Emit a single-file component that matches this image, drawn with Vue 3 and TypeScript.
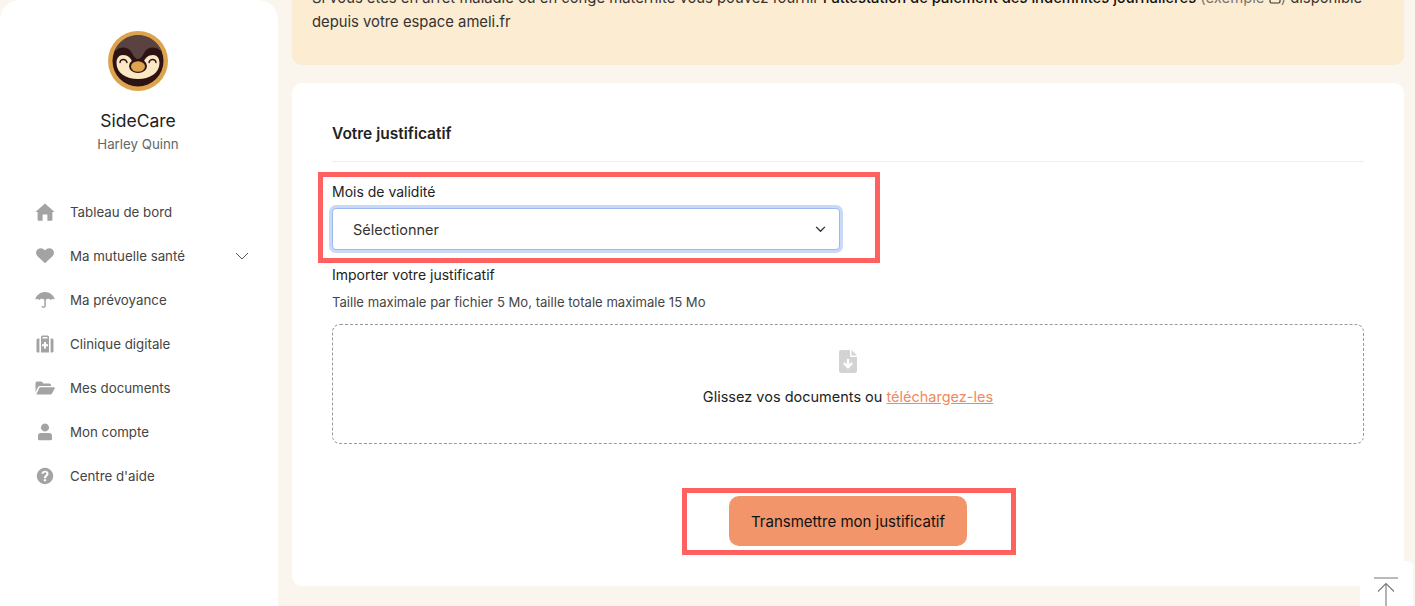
<script setup lang="ts">
interface NavItem { label: string; icon: string; vb: string; chevron?: boolean }
const nav: NavItem[] = [
  { label: 'Tableau de bord', vb: '0 0 20 18', icon: 'M10 0.5 L19.6 9 L17.4 9 L17.4 17 Q17.4 17.7 16.7 17.7 L12.4 17.7 L12.4 11.5 L7.6 11.5 L7.6 17.7 L3.3 17.7 Q2.6 17.7 2.6 17 L2.6 9 L0.4 9 Z' },
  { label: 'Ma mutuelle santé', vb: '0 0 20 18', chevron: true, icon: 'M10 16.3 L2.8 9.6 C0.4 7.2 0.6 3.8 2.8 2.2 C5.1 0.6 8.2 1.2 10 3.6 C11.8 1.2 14.9 0.6 17.2 2.2 C19.4 3.8 19.6 7.2 17.2 9.6 Z' },
  { label: 'Ma prévoyance', vb: '0 0 20 18', icon: 'M10 1 C14.8 1.2 18.8 4 19.8 8.6 C18.6 7.6 16.8 7.6 15.6 8.9 C14.4 7.6 12.2 7.5 10.8 8.8 L10.8 14.8 C10.8 17.4 6.9 17.8 6.4 15 L7.9 15 C8.1 16.1 9.3 16 9.3 14.8 L9.3 8.8 C7.9 7.5 5.6 7.6 4.4 8.9 C3.2 7.6 1.4 7.6 0.2 8.6 C1.2 4 5.2 1.2 10 1 Z' },
  { label: 'Clinique digitale', vb: '0 0 20 18', icon: 'M7.4 0.5 L12.6 0.5 Q14 0.5 14 2 L14 17.5 L6 17.5 L6 2 Q6 0.5 7.4 0.5 Z M7.6 2 L7.6 3.5 L12.4 3.5 L12.4 2 Z M9 7 L9 9.2 L7 9.2 L7 11.2 L9 11.2 L9 13.4 L11 13.4 L11 11.2 L13 11.2 L13 9.2 L11 9.2 L11 7 Z M3 3.5 L4.4 3.5 L4.4 17.5 L3 17.5 Q1.5 17.5 1.5 16 L1.5 5 Q1.5 3.5 3 3.5 Z M15.6 3.5 L17 3.5 Q18.5 3.5 18.5 5 L18.5 16 Q18.5 17.5 17 17.5 L15.6 17.5 Z' },
  { label: 'Mes documents', vb: '0 0 20 18', icon: 'M0.5 4 Q0.5 2.5 2 2.5 L6.5 2.5 L8.5 4.5 L14.5 4.5 Q16 4.5 16 6 L16 7 L5 7 Q3.6 7 3 8.2 L0.5 13 Z M4.6 8.2 L19 8.2 Q20.2 8.2 19.7 9.4 L17 14.6 Q16.5 15.5 15.5 15.5 L1.3 15.5 Z' },
  { label: 'Mon compte', vb: '0 0 20 18', icon: 'M10 0.5 A4 4 0 1 1 9.99 0.5 Z M6 10 L14 10 Q17 10 17 13 L17 16 Q17 17.2 15.8 17.2 L4.2 17.2 Q3 17.2 3 16 L3 13 Q3 10 6 10 Z' },
  { label: "Centre d'aide", vb: '0 0 20 18', icon: 'M10 0.8 A8.2 8.2 0 1 1 9.99 0.8 Z M10 3.8 C8 3.8 6.7 4.9 6.4 6.6 L8.4 6.9 C8.6 6 9.1 5.6 9.9 5.6 C10.8 5.6 11.4 6.1 11.4 6.8 C11.4 8 9 8.3 9 10.6 L9 11.2 L11 11.2 C11 9.4 13.5 9.2 13.5 6.7 C13.5 5 12 3.8 10 3.8 Z M10 12 A1.2 1.2 0 1 0 10.01 12 Z' },
]
</script>

<template>
  <div class="page">
    <aside class="sidebar">
      <svg class="logo" viewBox="0 0 60 60" width="60" height="60" aria-label="SideCare">
        <circle cx="30" cy="30" r="30" fill="#dea34d" />
        <circle cx="30" cy="30" r="25.5" fill="#2e1315" />
        <path d="M6 21 C12 15 20 15 24 22 C26 26 28 28 30 28 C32 28 34 26 36 22 C40 15 48 15 54 21 A25.5 25.5 0 0 0 6 21 Z" fill="#5a4240" />
        <path d="M8.5 32 C8.5 27 11 24 15 24 C20 24 23.5 27.5 24.5 32 L35.5 32 C36.5 27.5 40 24 45 24 C49 24 51.5 27 51.5 32 C51.5 42 42 48 30 48 C18 48 8.5 42 8.5 32 Z" fill="#fbe8c4" />
        <ellipse cx="30" cy="35" rx="9" ry="7" fill="#2e1315" />
        <ellipse cx="30" cy="35.5" rx="7" ry="5.2" fill="#dea34d" />
        <path d="M12 31.5 C12.5 27.5 18 27.5 19 31.5 M41 31.5 C42 27.5 47.5 27.5 48 31.5" fill="none" stroke="#2e1315" stroke-width="1.4" stroke-linecap="round" />
      </svg>
      <div class="brand">SideCare</div>
      <div class="user">Harley Quinn</div>
      <nav class="nav">
        <a v-for="item in nav" :key="item.label" class="nav-item">
          <svg class="nav-icon" :viewBox="item.vb" width="20" height="18"><path :d="item.icon" fill-rule="evenodd" /></svg>
          <span class="nav-label">{{ item.label }}</span>
          <svg v-if="item.chevron" class="nav-chevron" viewBox="0 0 14 8" width="14" height="8"><path d="M1 1 L7 7 L13 1" fill="none" stroke="#555" stroke-width="1" /></svg>
        </a>
      </nav>
    </aside>

    <main class="main">
      <section class="banner">
        Si vous êtes en arrêt maladie ou en congé maternité vous pouvez fournir <strong>l'attestation de paiement des indemnités journalières</strong>
        <span class="muted"> (exemple <svg class="doc" viewBox="0 0 12 12" width="12" height="12"><rect x="1" y="1" width="10" height="10" rx="1.5" fill="none" stroke="#333" stroke-width="1.2" /><path d="M3.5 5 H8.5 M3.5 7.5 H8.5 M4 1 V0 M8 1 V0" stroke="#333" stroke-width="1" /></svg>)</span> disponible<br />depuis votre espace ameli.fr
      </section>

      <section class="card">
        <h2 class="title">Votre justificatif</h2>
        <div class="field">
          <label class="label">Mois de validité</label>
          <div class="select">
            <span>Sélectionner</span>
            <svg viewBox="0 0 12 8" width="11" height="7"><path d="M1 1 L6 6 L11 1" fill="none" stroke="#333" stroke-width="1.6" /></svg>
          </div>
          <div class="mark mark-field"></div>
        </div>
        <div class="label import">Importer votre justificatif</div>
        <div class="hint">Taille maximale par fichier 5 Mo, taille totale maximale 15 Mo</div>
        <div class="drop">
          <svg viewBox="0 0 18 23" width="18" height="23"><path d="M2 0 H11 V6 Q11 7 12 7 H18 V21 Q18 23 16 23 H2 Q0 23 0 21 V2 Q0 0 2 0 Z M12.5 0 L18 5.5 H12.5 Z" fill="#d3d3d3" /><path d="M9 9 V17 M4.8 13 L9 17.2 L13.2 13" fill="none" stroke="#fff" stroke-width="2.4" /></svg>
          <p class="drop-text">Glissez vos documents ou <a class="link">téléchargez-les</a></p>
        </div>
        <div class="actions">
          <div class="action-wrap">
            <button class="submit" type="button">Transmettre mon justificatif</button>
            <div class="mark mark-btn"></div>
          </div>
        </div>
      </section>
    </main>

    <button class="top" type="button" aria-label="Haut de page">
      <svg viewBox="0 0 26 30" width="26" height="30"><path d="M1 1 H25 M13 30 V6.5 M5 14.5 L13 6.5 L21 14.5" fill="none" stroke="#777" stroke-width="1.1" /></svg>
    </button>
  </div>
</template>

<style scoped>
.page {
  position: relative;
  display: flex;
  height: 606px;
  overflow: hidden;
  background: #fbf6ed;
  font-family: "Inter", "Liberation Sans", sans-serif;
  color: #222;
}
.sidebar {
  flex: 0 0 278px;
  display: flex;
  flex-direction: column;
  align-items: center;
  box-sizing: border-box;
  padding: 31px 2px 0 0;
  background: #fff;
  border-radius: 20px 20px 0 0;
}
.logo { display: block; }
.brand { margin-top: 19px; font-size: 17.5px; line-height: 22px; color: #222; }
.user { margin-top: 2px; font-size: 13.3px; line-height: 20px; color: #666; }
.nav { align-self: stretch; margin-top: 36px; padding: 0 27px 0 35px; display: flex; flex-direction: column; }
.nav-item { display: flex; align-items: center; height: 44px; }
.nav-icon { fill: #a3a3a3; flex: none; margin-right: 15px; }
.nav-label { flex: 1; font-size: 13.3px; color: #444; }
.nav-chevron { flex: none; }
.main { flex: 1; min-width: 0; display: flex; flex-direction: column; gap: 18px; padding: 0 11px 0 14px; }
.banner {
  flex: none;
  box-sizing: border-box;
  height: 89px;
  margin-top: -24px;
  padding: 10px 20px 0;
  background: #fcecd1;
  border-radius: 10px;
  font-size: 14.8px;
  line-height: 24px;
  color: #333;
  white-space: nowrap;
}
.banner strong { font-weight: 500; color: #111; }
.muted { color: #777; }
.doc { vertical-align: -1px; }
.card {
  flex: none;
  box-sizing: border-box;
  height: 503px;
  padding: 40px 40px 0;
  background: #fff;
  border-radius: 10px;
}
.title {
  margin: 0;
  height: 38px;
  line-height: 22px;
  font-size: 15.5px;
  font-weight: 600;
  color: #222;
  border-bottom: 1px solid #eee;
}
.field { position: relative; margin-top: 19px; }
.label { font-size: 14px; line-height: 20px; color: #222; }
.select {
  box-sizing: border-box;
  display: flex;
  align-items: center;
  justify-content: space-between;
  width: 508px;
  height: 42px;
  margin-top: 6px;
  padding: 0 13px 0 20px;
  font-size: 14.5px;
  color: #333;
  background: #fff;
  border: 1px solid #9db9ee;
  border-radius: 4px;
  box-shadow: 0 0 0 3px #c9d9f8;
}
.mark { position: absolute; box-sizing: border-box; border: 5px solid #ff6161; pointer-events: none; }
.mark-field { left: -14px; top: -9px; width: 562px; height: 91px; }
.import { margin-top: 15px; }
.hint { margin-top: 7px; font-size: 13.1px; line-height: 20px; color: #444; }
.drop {
  box-sizing: border-box;
  height: 120px;
  margin-top: 12px;
  padding-top: 25px;
  border: 1px dashed #999;
  border-radius: 8px;
  text-align: center;
}
.drop svg { display: block; margin: 0 auto; }
.drop-text { margin: 14px 0 0; font-size: 14.5px; line-height: 20px; color: #222; }
.link { color: #f08a5d; text-decoration: underline; }
.actions { display: flex; justify-content: center; margin-top: 52px; }
.action-wrap { position: relative; }
.submit {
  display: block;
  width: 238px;
  height: 50px;
  padding: 0;
  border: 0;
  border-radius: 10px;
  background: #f2956a;
  font: inherit;
  font-size: 15px;
  color: #111;
}
.mark-btn { left: -47px; top: -8px; width: 334px; height: 67px; }
.top {
  position: absolute;
  right: 2px;
  bottom: 0;
  width: 53px;
  height: 45px;
  padding: 16px 1px 0 0;
  border: 0;
  border-radius: 6px 6px 0 0;
  background: #fff;
}
.top svg { display: block; margin: 0 auto; }
</style>
